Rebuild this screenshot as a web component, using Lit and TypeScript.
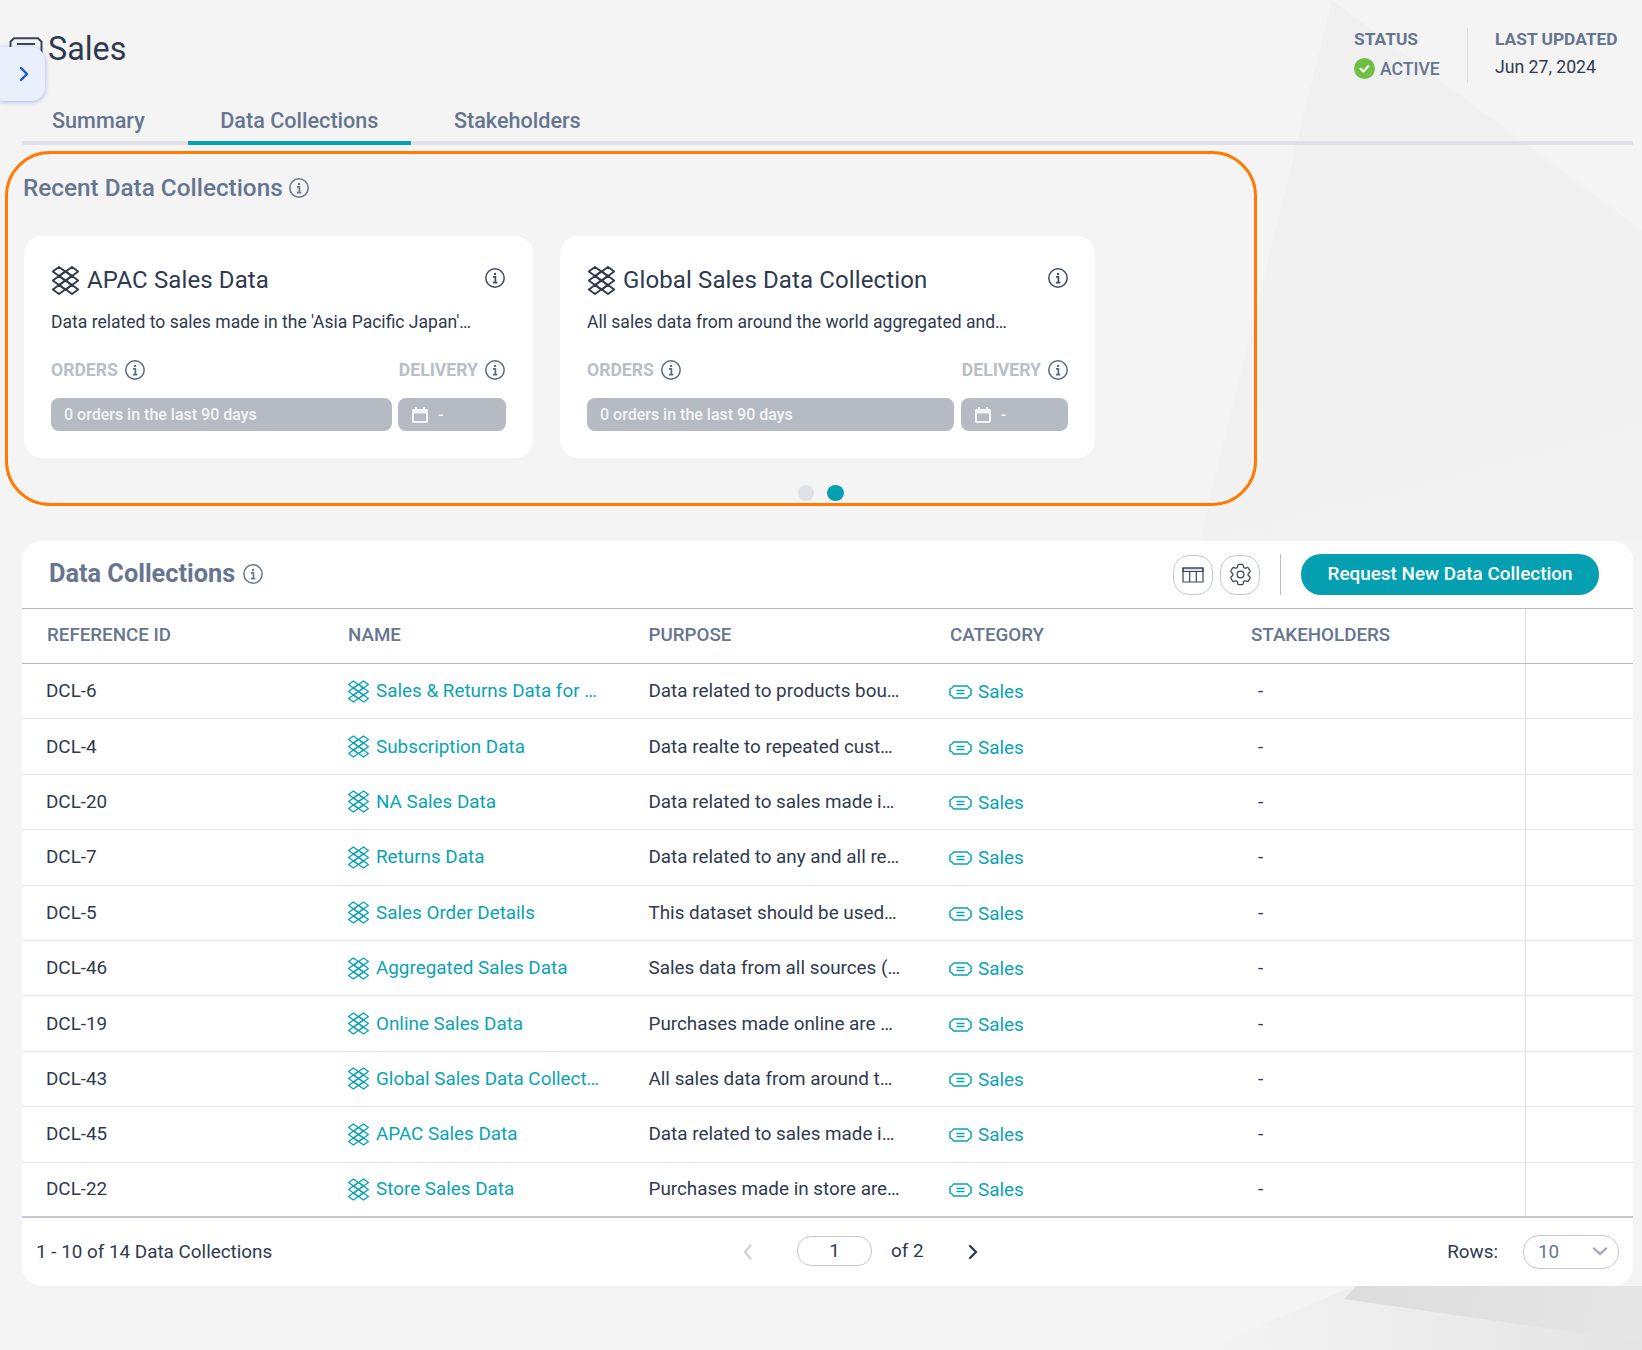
import { LitElement, html, css, svg } from "lit";
import { customElement } from "lit/decorators.js";

const lattice = (cls: string) => {
  const cs = [[7, 5.5], [20, 5.5], [13.5, 10], [7, 14.5], [20, 14.5], [13.5, 19], [7, 23.5], [20, 23.5]];
  return html`<svg class=${cls} viewBox="0 0 27 29" fill="none" stroke="currentColor" stroke-linejoin="round">
    ${cs.map(([x, y]) => svg`<path d="M${x - 6.2} ${y}L${x} ${y - 4.5}L${x + 6.2} ${y}L${x} ${y + 4.5}Z"/>`)}
  </svg>`;
};
const info = (cls = "info") => html`<svg class=${cls} viewBox="0 0 20 20" fill="none" stroke="currentColor">
  <circle cx="10" cy="10" r="9.2" stroke-width="1.5"/>
  <circle cx="10" cy="5.9" r="1.2" fill="currentColor" stroke="none"/>
  <path d="M8 8.9h2.4v5.4M7.9 14.6h4.4" stroke-width="1.7"/>
</svg>`;
const tag = (cls: string) => html`<svg class=${cls} viewBox="0 0 23 14" fill="none" stroke="currentColor" stroke-width="1.5">
  <path d="M4.5 1h14c.8 1.6 1.9 2.6 3.5 3.2v5.6c-1.6.6-2.7 1.6-3.5 3.2h-14C3.7 11.4 2.6 10.4 1 9.8V4.2C2.6 3.6 3.700 2.600 4.500 1Z" stroke-linejoin="round"/>
  <path d="M7.500 5.600h8M7.500 8.600h8"/>
</svg>`;
const chevron = (cls: string) => html`<svg class=${cls} viewBox="0 0 10 16" fill="none" stroke="currentColor" stroke-width="2.4" stroke-linecap="round" stroke-linejoin="round"><path d="M2 2l6 6-6 6"/></svg>`;

const rows: [string, string, string][] = [
  ["DCL-6", "Sales & Returns Data for …", "Data related to products bou…"],
  ["DCL-4", "Subscription Data", "Data realte to repeated cust…"],
  ["DCL-20", "NA Sales Data", "Data related to sales made i…"],
  ["DCL-7", "Returns Data", "Data related to any and all re…"],
  ["DCL-5", "Sales Order Details", "This dataset should be used…"],
  ["DCL-46", "Aggregated Sales Data", "Sales data from all sources (…"],
  ["DCL-19", "Online Sales Data", "Purchases made online are …"],
  ["DCL-43", "Global Sales Data Collect…", "All sales data from around t…"],
  ["DCL-45", "APAC Sales Data", "Data related to sales made i…"],
  ["DCL-22", "Store Sales Data", "Purchases made in store are…"],
];

@customElement("app-root")
export class AppRoot extends LitElement {
  static styles = css`
    :host {
      display: block;
      position: relative;
      min-height: 1350px;
      background: #f4f4f4;
      font-family: Roboto, "Liberation Sans", sans-serif;
      color: #2f3a4f;
      overflow: hidden;
    }
    .bg { position: absolute; inset: 0; width: 1642px; height: 1350px; }
    .page { position: relative; padding-top: 28px; }
    .toggle {
      position: absolute; left: 0; top: 47px; width: 45px; height: 54px;
      background: #e9f0fb; border-radius: 0 14px 14px 0;
      box-shadow: 0 1px 5px rgba(60, 110, 220, 0.45);
      display: flex; align-items: center; justify-content: center;
      color: #1657d0; padding-left: 3px; box-sizing: border-box;
    }
    .toggle svg { width: 10px; height: 16px; }
    .top { display: flex; justify-content: space-between; height: 68px; padding: 0 0 0 9px; }
    .page-title { display: flex; align-items: flex-start; gap: 5px; font-size: 32.3px; line-height: 40px; color: #2f3a4f; height: 40px; }
    .page-title span { padding-top: 1px; }
    .page-title svg { width: 34px; height: 20px; margin-top: 9px; color: #3a4357; }
    .meta { display: flex; padding-right: 24px; }
    .meta-a { width: 114px; box-sizing: border-box; border-right: 1px solid #e0e0e3; height: 55px; }
    .meta-b { padding-left: 27px; width: 150px; box-sizing: border-box; white-space: nowrap; }
    .meta-k { font-size: 17.35px; font-weight: 700; color: #667590; line-height: 22px; }
    .meta-v { font-size: 17.65px; line-height: 22px; margin-top: 6px; display: flex; align-items: center; gap: 5px; }
    .meta-v.active { color: #667590; font-weight: 500; font-size: 17.6px; }
    .meta-v.active span { padding-top: 2px; }
    .ok { width: 21px; height: 21px; }
    .tabs { display: flex; margin: 0 9px 0 22px; border-bottom: 4px solid #e0e0e6; height: 45px; box-sizing: content-box; }
    .tab { font-size: 21.6px; font-weight: 500; color: #667590; line-height: 50px; padding: 0 32.5px; white-space: nowrap; height: 45px; }
    .tab:first-child { padding-right: 43px; padding-left: 30px; }
    .tab.on { height: 45px; border-bottom: 4px solid #04a0b2; box-sizing: content-box; }
    .tab:nth-child(3) { padding-left: 43px; }
    .recent {
      margin: 6px 0 0 5px; width: 1252px; height: 355px; box-sizing: border-box;
      border: 3px solid #ff7a00; border-radius: 45px;
    }
    .h2 { font-size: 24.3px; font-weight: 500; color: #667590; line-height: 30px; display: flex; align-items: center; gap: 6px; }
    .h2 .info { width: 20px; height: 20px; color: #667590; }
    .recent .h2 { padding: 19px 0 0 15px; margin-bottom: -1px; }
    .cards { display: flex; gap: 27px; margin: 34px 0 0 16px; }
    .card { background: #fff; border-radius: 18px; height: 222px; box-sizing: border-box; padding: 30px 27px 0; }
    .c1 { width: 509px; } .c2 { width: 535px; }
    .card-head { display: flex; align-items: center; height: 29px; }
    .lat { width: 27px; height: 29px; color: #2f3a4f; flex: none; stroke-width: 1.9; margin-left: 1px; }
    .card-title { font-size: 24px; line-height: 29px; margin-left: 8px; flex: 1; letter-spacing: 0.12px; }
    .info { width: 20px; height: 20px; color: #3f4a63; flex: none; }
    .card-head .info { margin-top: -6px; }
    .c1 .card-head .info { margin-right: 1px; }
    .c1 .labels { padding-right: 1px; }
    .desc { font-size: 17.55px; line-height: 24px; margin-top: 15px; color: #2f3a4f; }
    .labels { display: flex; justify-content: space-between; margin-top: 26px; height: 20px; align-items: center; }
    .lab { display: flex; align-items: center; gap: 7px; font-size: 17.6px; font-weight: 700; color: #b9bec9; }
    .lab .info { color: #5a6884; }
    .bars { display: flex; gap: 6px; margin-top: 18px; }
    .bar { background: #b6bac3; border-radius: 8px; height: 33px; color: #f3f4f6; font-size: 16px; font-weight: 500; display: flex; align-items: center; box-sizing: border-box; padding-left: 13px; }
    .bar1 { flex: 1; }
    .c1 .bar2 { width: 108px; padding-left: 14px; }
    .c2 .bar2 { width: 107px; padding-left: 14px; }
    .c2 .bars { gap: 7px; }
    .bar2 svg { width: 16px; height: 16px; margin-right: 10px; }
    .dots { display: flex; gap: 13px; margin: 27px 0 0 790px; }
    .dot { width: 16px; height: 16px; border-radius: 50%; background: #dfe1e6; }
    .dot.on { background: #04a0b2; width: 17px; }

    .panel { margin: 35px 9px 0 22px; background: #fff; border-radius: 20px; height: 745px; }
    .ph { display: flex; align-items: center; height: 67px; border-bottom: 1px solid #b5b9c4; padding: 0 34px 0 27px; }
    .ph .h2 { flex: 1; font-weight: 700; gap: 8px; font-size: 25.3px; padding-bottom: 2px; }
    .ib { width: 40px; height: 40px; box-sizing: border-box; border: 1px solid #c5c8d2; border-radius: 16px; display: flex; align-items: center; justify-content: center; color: #3a4357; }
    .ib svg { width: 24px; height: 24px; }
    .ib + .ib { margin-left: 7px; }
    .ib + .ib svg { width: 27px; height: 27px; }
    .vr { width: 1px; height: 41px; background: #b9bcc6; margin: 0 20px 0 20px; }
    .cta { width: 298px; height: 41px; box-sizing: border-box; padding-bottom: 2px; border-radius: 20px; background: #04a0b2; color: #fff; font-size: 18.9px; font-weight: 500; display: flex; align-items: center; justify-content: center; }
    .tr { display: grid; grid-template-columns: 301px 301px 301px 301px 299px 1fr; height: 55.4px; box-sizing: border-box; border-bottom: 1px solid #e5e6ea; font-size: 18.85px; }
    .tr.head { height: 55px; border-bottom: 1px solid #b5b9c4; color: #667590; font-weight: 500; font-size: 18.75px; }
    .tr.head .td { padding-bottom: 3px; box-sizing: border-box; }
    .tr.head .td.end { padding-bottom: 0; }
    .tr.last { border-bottom: 2px solid #c5c8d2; }
    .td { display: flex; align-items: center; padding-left: 25px; white-space: nowrap; overflow: hidden; }
    .td.first { padding-left: 24px; }
    .td.purp { padding-left: 24.5px; }
    .td.end { border-left: 1px solid #dcdde2; padding: 0; }
    .td.dash { padding-left: 32px; }
    .link { color: #0aa3b5; }
    .lat2 { width: 21px; height: 23px; margin-right: 7px; flex: none; stroke-width: 1.8; }
    .cat { padding-top: 2px; box-sizing: border-box; }
    .tag { width: 23px; height: 14px; margin-right: 6px; flex: none; margin-left: -1px; }
    .tf { display: flex; align-items: center; height: 68px; padding: 0 14px 0 14px; font-size: 18.85px; }
    .count { width: 707px; flex: none; }
    .pv { width: 9px; height: 16px; color: #cfd1d6; flex: none; }
    .pg { width: 75px; height: 30px; box-sizing: border-box; border: 1px solid #c5c8d2; border-radius: 14px; margin: 0 0 2px 45px; text-align: center; line-height: 28px; flex: none; }
    .of { margin: 0 0 2px 19px; }
    .nx { width: 10px; height: 16px; margin-left: 44px; color: #2f3a4f; flex: none; }
    .rl { margin-left: auto; }
    .sel { width: 96px; height: 34px; box-sizing: border-box; border: 1px solid #c5c8d2; border-radius: 16px; margin-left: 25px; display: flex; align-items: center; justify-content: space-between; padding: 0 10px 0 14px; color: #667590; }
    .sel svg { width: 16px; height: 9px; color: #a9aeb9; }
  `;

  card(cls: string, title: string, desc: string) {
    return html`<div class="card ${cls}">
      <div class="card-head">${lattice("lat")}<div class="card-title">${title}</div>${info()}</div>
      <div class="desc">${desc}</div>
      <div class="labels">
        <div class="lab">ORDERS ${info()}</div>
        <div class="lab">DELIVERY ${info()}</div>
      </div>
      <div class="bars">
        <div class="bar bar1">0 orders in the last 90 days</div>
        <div class="bar bar2">
          <svg viewBox="0 0 16 16" fill="currentColor" fill-rule="evenodd"><path d="M3 0h2v2h6V0h2v2h1.500c.8 0 1.500.7 1.500 1.500v11c0 .8-.7 1.500-1.500 1.500h-13C.7 16 0 15.300 0 14.500v-11C0 2.700.7 2 1.500 2H3V0Zm-1 6.500v7.500h12V6.500H2Z"/></svg>-
        </div>
      </div>
    </div>`;
  }

  render() {
    return html`
      <svg class="bg" viewBox="0 0 1642 1350">
        <defs>
          <linearGradient id="g1" x1="1330" y1="0" x2="1500" y2="600" gradientUnits="userSpaceOnUse">
            <stop offset="0" stop-color="#f0f0f0"/><stop offset="1" stop-color="#f2f2f2"/>
          </linearGradient>
          <linearGradient id="g2" x1="1340" y1="1290" x2="1642" y2="1350" gradientUnits="userSpaceOnUse">
            <stop offset="0" stop-color="#dcdcdc"/><stop offset="1" stop-color="#e6e6e6"/>
          </linearGradient>
          <linearGradient id="g3" x1="1200" y1="1350" x2="1642" y2="1300" gradientUnits="userSpaceOnUse">
            <stop offset="0" stop-color="#f4f4f4"/><stop offset="1" stop-color="#e4e4e4"/>
          </linearGradient>
        </defs>
        <path d="M1332 0L1642 230V540H1202V530Z" fill="url(#g1)"/>
        <path d="M1200 1350L1355 1286H1642V1350Z" fill="url(#g3)"/>
        <path d="M1356 1286L1344 1299L1642 1342V1286Z" fill="url(#g2)"/>
      </svg>
      <div class="page">
        <div class="top">
          <div class="page-title">
            <svg viewBox="0 0 34 20" fill="none" stroke="currentColor" stroke-width="2" stroke-linejoin="round"><path d="M5 1.200h24l3.500 3.500v10.600L29 18.800H5l-3.500-3.500V4.700Z"/><path d="M8 7h18M8 12h18"/></svg>
            <span>Sales</span>
          </div>
          <div class="meta">
            <div class="meta-a">
              <div class="meta-k">STATUS</div>
              <div class="meta-v active">
                <svg class="ok" viewBox="0 0 21 21"><circle cx="10.500" cy="10.500" r="10.500" fill="#6fbf44"/><path d="M6.500 10.800l2.800 2.700 5-5.200" fill="none" stroke="#fff" stroke-width="2.200" stroke-linecap="round" stroke-linejoin="round"/></svg><span>ACTIVE</span>
              </div>
            </div>
            <div class="meta-b">
              <div class="meta-k">LAST UPDATED</div>
              <div class="meta-v">Jun 27, 2024</div>
            </div>
          </div>
        </div>
        <div class="tabs">
          <div class="tab">Summary</div>
          <div class="tab on">Data Collections</div>
          <div class="tab">Stakeholders</div>
        </div>
        <section class="recent">
          <div class="h2">Recent Data Collections ${info()}</div>
          <div class="cards">
            ${this.card("c1", "APAC Sales Data", "Data related to sales made in the 'Asia Pacific Japan'…")}
            ${this.card("c2", "Global Sales Data Collection", "All sales data from around the world aggregated and…")}
          </div>
          <div class="dots"><div class="dot"></div><div class="dot on"></div></div>
        </section>
        <section class="panel">
          <div class="ph">
            <div class="h2">Data Collections ${info()}</div>
            <div class="ib"><svg viewBox="0 0 24 24" fill="none" stroke="currentColor" stroke-width="1.200"><path d="M2 5h20v14H2zM2 8.500h20M8.700 8.500V19M15.300 8.500V19"/><path d="M2 5h20v3.500H2z" fill="currentColor" fill-opacity=".15"/></svg></div>
            <div class="ib"><svg viewBox="0 0 24 24" fill="none" stroke="currentColor" stroke-width="1.100" stroke-linejoin="round"><path d="M9.594 3.940c.090-.542.560-.940 1.110-.940h2.593c.550 0 1.020.398 1.110.940l.213 1.281c.063.374.313.686.645.870.074.040.147.083.220.127.324.196.720.257 1.075.124l1.217-.456a1.125 1.125 0 011.370.490l1.296 2.247a1.125 1.125 0 01-.260 1.431l-1.003.827c-.293.240-.438.613-.431.992a6.759 6.759 0 010 .255c-.007.378.138.750.430.990l1.005.828c.424.350.534.954.260 1.430l-1.298 2.247a1.125 1.125 0 01-1.369.491l-1.217-.456c-.355-.133-.750-.072-1.076.124a6.570 6.570 0 01-.220.128c-.331.183-.581.495-.644.869l-.213 1.280c-.090.543-.560.941-1.110.941h-2.594c-.550 0-1.020-.398-1.110-.940l-.213-1.281c-.062-.374-.312-.686-.644-.870a6.520 6.520 0 01-.220-.127c-.325-.196-.720-.257-1.076-.124l-1.217.456a1.125 1.125 0 01-1.369-.490l-1.297-2.247a1.125 1.125 0 01.260-1.431l1.004-.827c.292-.240.437-.613.430-.992a6.932 6.932 0 010-.255c.007-.378-.138-.750-.430-.990l-1.004-.828a1.125 1.125 0 01-.260-1.430l1.297-2.247a1.125 1.125 0 011.370-.491l1.216.456c.356.133.751.072 1.076-.124.072-.044.146-.087.220-.128.332-.183.582-.495.644-.869l.214-1.281z"/><circle cx="12" cy="12" r="3"/></svg></div>
            <div class="vr"></div>
            <div class="cta">Request New Data Collection</div>
          </div>
          <div class="tr head">
            <div class="td">REFERENCE ID</div><div class="td">NAME</div><div class="td purp">PURPOSE</div><div class="td">CATEGORY</div><div class="td">STAKEHOLDERS</div><div class="td end"></div>
          </div>
          ${rows.map((r, i) => html`<div class="tr ${i === rows.length - 1 ? "last" : ""}">
            <div class="td first">${r[0]}</div>
            <div class="td link">${lattice("lat2")}${r[1]}</div>
            <div class="td purp">${r[2]}</div>
            <div class="td link cat">${tag("tag")}Sales</div>
            <div class="td dash">-</div>
            <div class="td end"></div>
          </div>`)}
          <div class="tf">
            <div class="count">1 - 10 of 14 Data Collections</div>
            <svg class="pv" viewBox="0 0 9 16" fill="none" stroke="currentColor" stroke-width="2.200" stroke-linecap="round" stroke-linejoin="round"><path d="M7.500 1.500L2 8l5.500 6.500"/></svg>
            <div class="pg">1</div>
            <div class="of">of 2</div>
            ${chevron("nx")}
            <div class="rl">Rows:</div>
            <div class="sel">10 <svg viewBox="0 0 16 9" fill="none" stroke="currentColor" stroke-width="2.400" stroke-linecap="round" stroke-linejoin="round"><path d="M2 1.500l6 5.500 6-5.500"/></svg></div>
          </div>
        </section>
      </div>
      <div class="toggle">${chevron("")}</div>
    `;
  }
}
